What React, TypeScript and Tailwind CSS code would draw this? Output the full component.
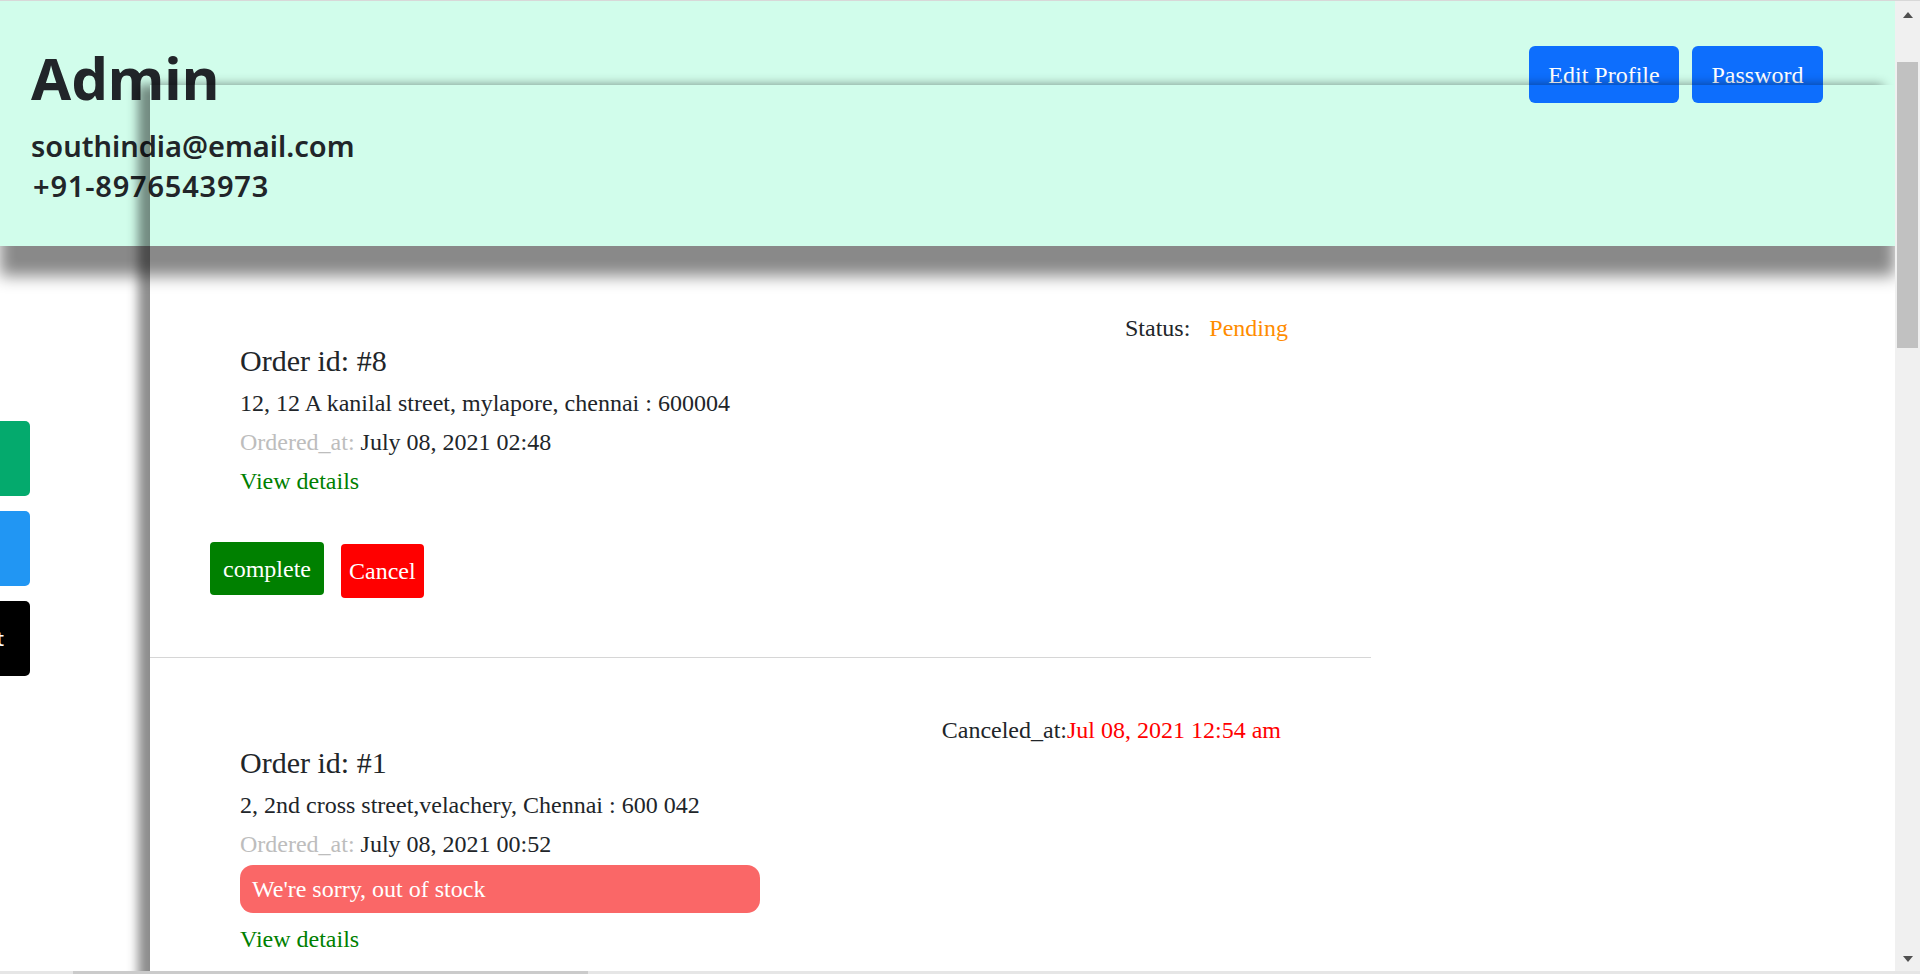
function Header() {
  return (
    <header className="absolute inset-x-0 top-0 z-10 flex h-[245px] items-start justify-between bg-[#d1fdeb] pl-[31px] pr-[72px] shadow-[0_30px_15px_#898989]">
      <div className="pt-[47px] font-['Noto_Sans',sans-serif] text-[#212529]">
        <h1 className="text-[58px] font-bold leading-[60px]">Admin</h1>
        <p className="mt-[18px] text-[29px] font-semibold leading-[40px]">southindia@email.com</p>
        <p className="ml-[2px] text-[29px] font-semibold leading-[40px] tracking-[0.8px]">+91-8976543973</p>
      </div>
      <div className="mt-[45px] flex gap-[13px]">
        <button className="h-[57px] w-[150px] rounded-[6px] bg-[#0d6efd] text-[24px] text-white">
          Edit Profile
        </button>
        <button className="h-[57px] w-[131px] rounded-[6px] bg-[#0d6efd] text-[24px] text-white">
          Password
        </button>
      </div>
    </header>
  );
}

function SideNav() {
  return (
    <nav className="absolute left-0 top-[420px] z-30 flex flex-col gap-[15px] font-['Noto_Sans',sans-serif] text-[20px] text-white">
      <a className="-ml-[100px] flex h-[75px] w-[130px] items-center rounded-r-[5px] bg-[#04aa6d] pl-[15px]">
        Orders
      </a>
      <a className="-ml-[100px] flex h-[75px] w-[130px] items-center rounded-r-[5px] bg-[#2196f3] pl-[15px]">
        Users
      </a>
      <a className="-ml-[100px] flex h-[75px] w-[130px] items-center justify-end rounded-r-[5px] bg-black pr-[26px] text-white">
        Logout
      </a>
    </nav>
  );
}

function OrderInfo({ id, address, orderedAt }) {
  return (
    <>
      <h3 className="pb-[6px] text-[30px] leading-[35px]">Order id: #{id}</h3>
      <p className="text-[24px] leading-[39px]">{address}</p>
      <p className="text-[24px] leading-[39px]">
        <span className="text-[#bdbdbd]">Ordered_at:</span> {orderedAt}
      </p>
    </>
  );
}

function Scrollbar() {
  return (
    <div className="flex w-[25px] flex-col bg-[#f0f0f0]">
      <div className="flex h-[28px] items-center justify-center">
        <div className="h-0 w-0 border-x-[5px] border-b-[6px] border-x-transparent border-b-[#505050]" />
      </div>
      <div className="mx-[2px] mt-[33px] h-[286px] bg-[#c1c1c1]" />
      <div className="mt-auto flex h-[24px] items-center justify-center">
        <div className="h-0 w-0 border-x-[5px] border-t-[6px] border-x-transparent border-t-[#505050]" />
      </div>
    </div>
  );
}

export default function App() {
  return (
    <div className="flex h-[974px] w-full flex-col overflow-hidden border-t border-[#d8d8d8] bg-white font-['Liberation_Serif',serif] text-[#212529]">
      <div className="flex min-h-0 flex-1">
        <main className="relative min-w-0 flex-1 overflow-hidden">
          <Header />
          <SideNav />
          <section className="relative z-20 ml-[150px] mt-[84px] h-[900px] shadow-[-12px_0_10px_rgba(0,0,0,0.45)]">
            <div className="w-[1221px] pt-[171px]">
              {/* pending order */}
              <div className="border-b border-[#d6d6d6] pb-[59px] pt-[57px]">
                <div className="flex justify-end gap-[19px] pr-[83px] text-[24px] leading-[30px]">
                  <span>Status:</span>
                  <span className="text-[#ff8c00]">Pending</span>
                </div>
                <div className="pl-[90px]">
                  <OrderInfo
                    id={8}
                    address="12, 12 A kanilal street, mylapore, chennai : 600004"
                    orderedAt="July 08, 2021 02:48"
                  />
                  <a className="block text-[24px] leading-[39px] text-[#008000]">View details</a>
                </div>
                <div className="mt-[41px] flex items-start gap-[17px] pl-[60px]">
                  <button className="h-[53px] rounded-[4px] bg-[#008000] px-[13px] text-[24px] text-white">
                    complete
                  </button>
                  <button className="mt-[2px] h-[54px] rounded-[4px] bg-[#ff0000] px-[8px] text-[24px] text-white">
                    Cancel
                  </button>
                </div>
              </div>

              {/* canceled order */}
              <div className="pt-[57px]">
                <div className="flex justify-end pr-[90px] text-[24px] leading-[30px]">
                  <span>Canceled_at:</span>
                  <span className="text-[#ff0000]">Jul 08, 2021 12:54 am</span>
                </div>
                <div className="pl-[90px]">
                  <OrderInfo
                    id={1}
                    address="2, 2nd cross street,velachery, Chennai : 600 042"
                    orderedAt="July 08, 2021 00:52"
                  />
                  <div className="mt-[1px] h-[48px] w-[520px] rounded-[13px] bg-[#fa6767] pl-[12px] text-[24px] leading-[48px] text-white">
                    We're sorry, out of stock
                  </div>
                  <a className="mt-[7px] block text-[24px] leading-[39px] text-[#008000]">View details</a>
                </div>
              </div>
            </div>
          </section>
        </main>
        <Scrollbar />
      </div>
      <div className="flex h-[3px] bg-[#e6e6e6]">
        <div className="ml-[73px] w-[515px] bg-[#cbcbcb]" />
      </div>
    </div>
  );
}
